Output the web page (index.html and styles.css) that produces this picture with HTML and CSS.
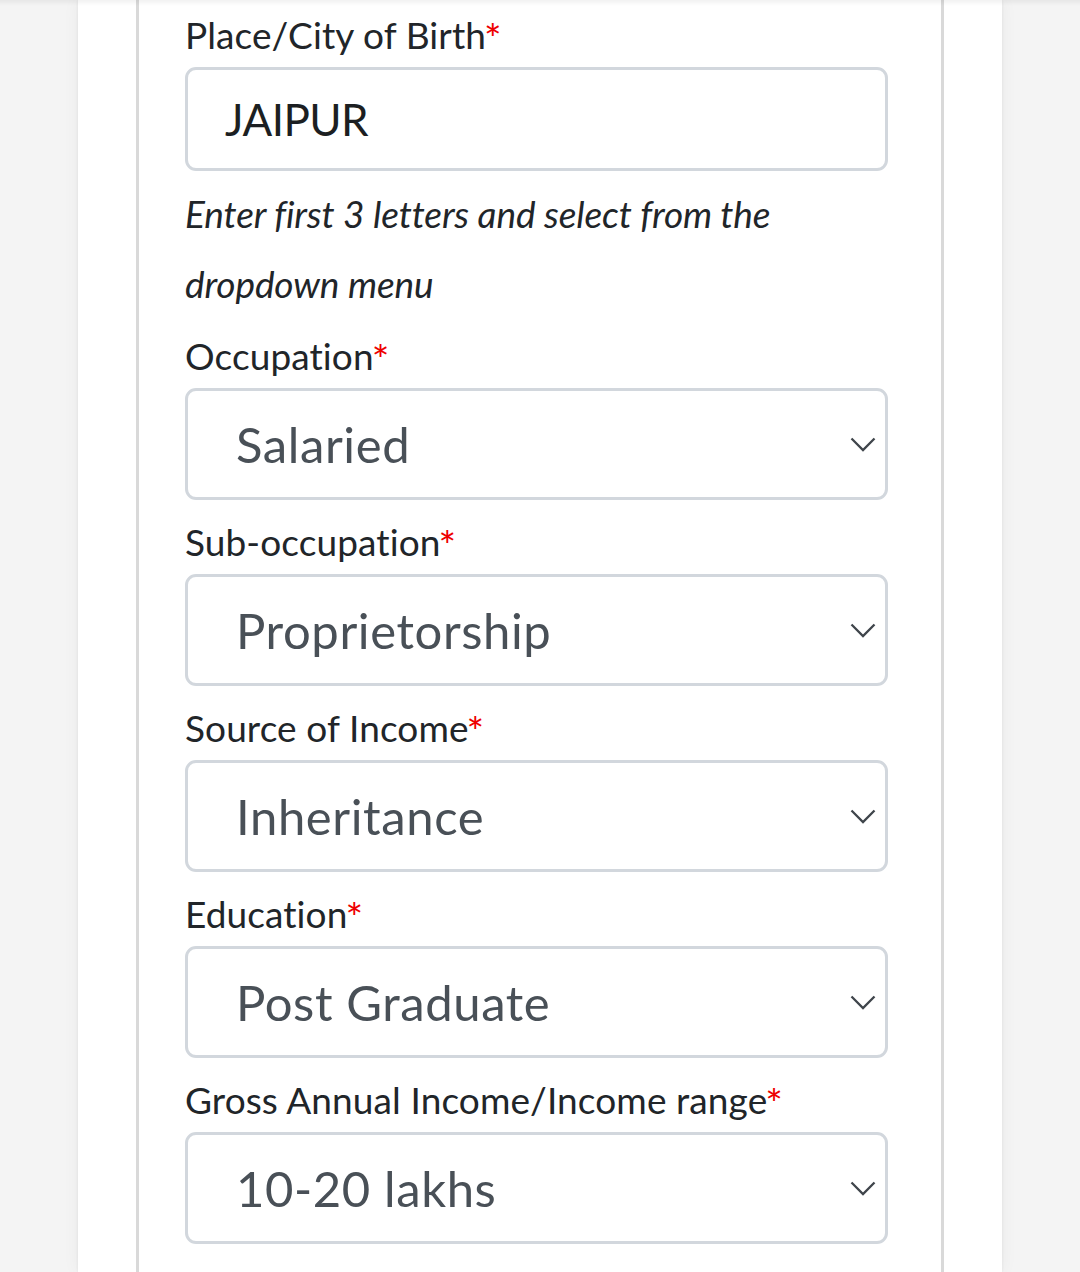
FILE: index.html
```html
<!DOCTYPE html>
<html lang="en">
<head>
<meta charset="utf-8">
<title>Personal details</title>
<link rel="stylesheet" href="styles.css">
</head>
<body>
<div class="card">
  <div class="panel">
    <div class="field">
      <label class="label" for="pob">Place/City of Birth<span class="req">*</span></label>
      <input class="input" id="pob" type="text" value="JAIPUR">
      <p class="help">Enter first 3 letters and select from the dropdown menu</p>
    </div>
    <div class="field">
      <label class="label" for="occ">Occupation<span class="req">*</span></label>
      <div class="select-wrap">
        <select class="select" id="occ"><option>Salaried</option></select>
        <svg class="chev" width="26" height="15" viewBox="0 0 26 15"><polyline points="1.5,1.5 13,13 24.5,1.5" fill="none" stroke="#3f454b" stroke-width="2.3"/></svg>
      </div>
    </div>
    <div class="field">
      <label class="label" for="sub">Sub-occupation<span class="req">*</span></label>
      <div class="select-wrap">
        <select class="select" id="sub"><option>Proprietorship</option></select>
        <svg class="chev" width="26" height="15" viewBox="0 0 26 15"><polyline points="1.5,1.5 13,13 24.5,1.5" fill="none" stroke="#3f454b" stroke-width="2.3"/></svg>
      </div>
    </div>
    <div class="field">
      <label class="label" for="src">Source of Income<span class="req">*</span></label>
      <div class="select-wrap">
        <select class="select" id="src"><option>Inheritance</option></select>
        <svg class="chev" width="26" height="15" viewBox="0 0 26 15"><polyline points="1.5,1.5 13,13 24.5,1.5" fill="none" stroke="#3f454b" stroke-width="2.3"/></svg>
      </div>
    </div>
    <div class="field">
      <label class="label" for="edu">Education<span class="req">*</span></label>
      <div class="select-wrap">
        <select class="select" id="edu"><option>Post Graduate</option></select>
        <svg class="chev" width="26" height="15" viewBox="0 0 26 15"><polyline points="1.5,1.5 13,13 24.5,1.5" fill="none" stroke="#3f454b" stroke-width="2.3"/></svg>
      </div>
    </div>
    <div class="field">
      <label class="label" for="inc">Gross Annual Income/Income range<span class="req">*</span></label>
      <div class="select-wrap">
        <select class="select" id="inc"><option>10-20 lakhs</option></select>
        <svg class="chev" width="26" height="15" viewBox="0 0 26 15"><polyline points="1.5,1.5 13,13 24.5,1.5" fill="none" stroke="#3f454b" stroke-width="2.3"/></svg>
      </div>
    </div>
  </div>
</div>
</body>
</html>
```
FILE: styles.css
```css
html, body {
  margin: 0;
  padding: 0;
}
body {
  background: #f4f4f4;
  font-family: Lato, "Noto Sans", sans-serif;
  color: #212529;
  min-height: 1272px;
}
body::before {
  content: "";
  position: fixed;
  left: 0;
  right: 0;
  top: 0;
  height: 6px;
  background: linear-gradient(to bottom, rgba(0,0,0,0.05), rgba(0,0,0,0));
  z-index: 5;
  pointer-events: none;
}
.card {
  width: 924px;
  margin: 0 auto;
  background: #ffffff;
  min-height: 1272px;
  box-shadow: 0 0 3px rgba(0,0,0,0.07), 0 0 16px rgba(0,0,0,0.05);
}
.panel {
  width: 808px;
  margin: 0 auto;
  border-left: 3px solid #d9d9d9;
  border-right: 3px solid #d9d9d9;
  padding: 3px 53px 0 46px;
  box-sizing: border-box;
  min-height: 1272px;
}
.field {
  margin-bottom: 10px;
}
.label {
  display: block;
  font-size: 37px;
  letter-spacing: 0.1px;
  line-height: 64px;
  height: 64px;
  color: #212529;
}
.req {
  color: #ee0000;
  font-size: 1.12em;
  line-height: 0;
  vertical-align: -5px;
  margin-left: -2px;
}
.input {
  display: block;
  box-sizing: border-box;
  width: 100%;
  height: 104px;
  border: 3px solid #d2d7dd;
  border-radius: 11px;
  padding: 0 0 0 37px;
  font-family: inherit;
  font-size: 44px;
  letter-spacing: -0.6px;
  color: #1c1f22;
  background: #fff;
  outline: none;
}
.help {
  margin: 8px 0 -5px;
  font-style: italic;
  font-size: 37px;
  letter-spacing: -0.1px;
  line-height: 70px;
  color: #212529;
}
.select-wrap {
  position: relative;
}
.select {
  display: block;
  box-sizing: border-box;
  width: 100%;
  height: 112px;
  border: 3px solid #d2d7dd;
  border-radius: 11px;
  padding: 0 0 0 48px;
  font-family: inherit;
  font-size: 49px;
  letter-spacing: 0.6px;
  color: #495057;
  background: #fff;
  appearance: none;
  -webkit-appearance: none;
  outline: none;
}
.chev {
  position: absolute;
  right: 12px;
  top: 49px;
  pointer-events: none;
}
```
